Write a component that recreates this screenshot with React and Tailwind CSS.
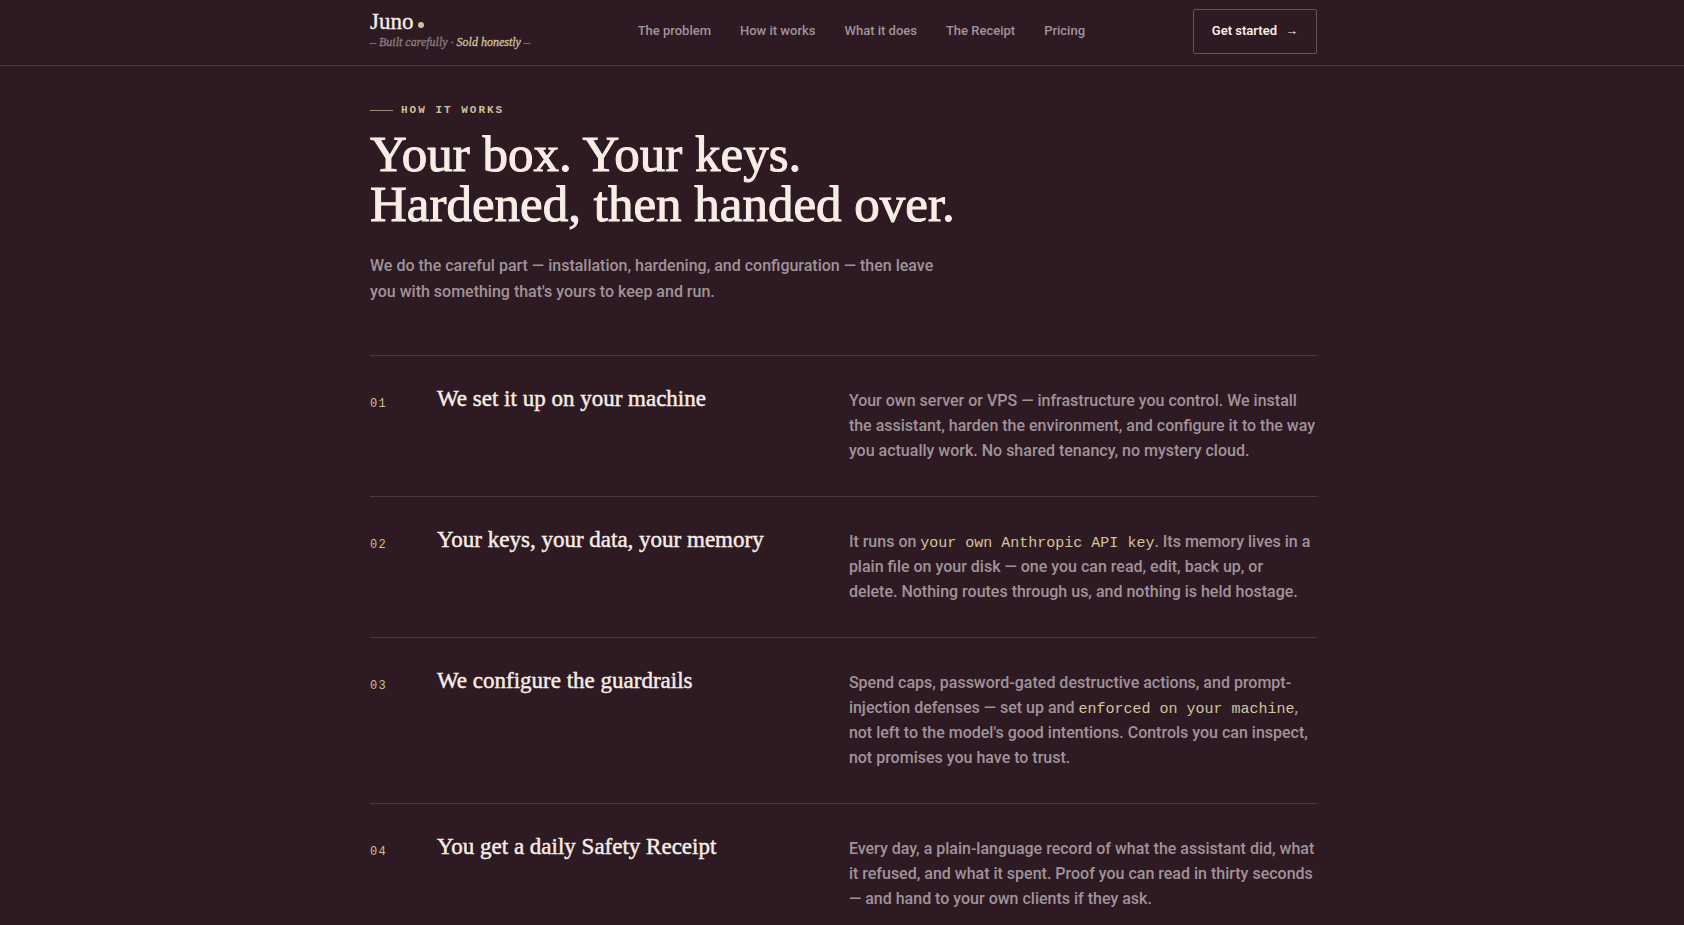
import React from "react";

const navLinks = [
  { label: "The problem", href: "#problem" },
  { label: "How it works", href: "#how" },
  { label: "What it does", href: "#what" },
  { label: "The Receipt", href: "#receipt" },
  { label: "Pricing", href: "#pricing" },
];

const steps = [
  {
    number: "01",
    title: "We set it up on your machine",
    body: (
      <>
        Your own server or VPS — infrastructure you control. We install
        the assistant, harden the environment, and configure it to the way
        you actually work. No shared tenancy, no mystery cloud.
      </>
    ),
  },
  {
    number: "02",
    title: "Your keys, your data, your memory",
    body: (
      <>
        It runs on <Mono>your own Anthropic API key</Mono>. Its memory lives in a
        plain file on your disk — one you can read, edit, back up, or
        <br />
        delete. Nothing routes through us, and nothing is held hostage.
      </>
    ),
  },
  {
    number: "03",
    title: "We configure the guardrails",
    body: (
      <>
        Spend caps, password-gated destructive actions, and prompt-injection
        defenses — set up and <Mono>enforced on your machine</Mono>, not left
        to the model's good intentions. Controls you can inspect, not promises
        you have to trust.
      </>
    ),
  },
  {
    number: "04",
    title: "You get a daily Safety Receipt",
    body: (
      <>
        Every day, a plain-language record of what the assistant did, what
        it refused, and what it spent. Proof you can read in thirty seconds
        — and hand to your own clients if they ask.
      </>
    ),
  },
];

function Mono({ children }) {
  return (
    <code className="font-['Liberation_Mono',monospace] text-[15px] leading-none font-normal text-[#d3c49d]">
      {children}
    </code>
  );
}

function Header() {
  return (
    <header className="border-b border-[#4a373f]">
      <div className="mx-auto flex h-[65px] max-w-[950px] items-center justify-between pb-[2px] pl-[3px]">
        <a href="#top" className="font-['Liberation_Serif',serif] [-webkit-text-stroke:0.02em]">
          <span className="flex items-center gap-[5px] text-[23px] leading-5 text-[#f6ede6]">
            Juno
            <span className="mt-[6px] size-[6px] rounded-full bg-[#cfc09b]" />
          </span>
          <span className="block text-[12px] leading-5 text-[#8b7b80] italic">
            – Built carefully · <span className="text-[#cfc09b]">Sold honestly</span> –
          </span>
        </a>
        <nav className="flex items-center gap-[29px] pb-[2px]">
          {navLinks.map((link) => (
            <a key={link.label} href={link.href} className="text-[13px] font-medium text-[#a0939a]">
              {link.label}
            </a>
          ))}
        </nav>
        <button className="flex h-[45px] items-center gap-2 rounded-xs border border-[#66525a] px-[18px] pb-[2px] text-[13px] font-semibold text-[#f6ede6]">
          Get started <span aria-hidden="true">→</span>
        </button>
      </div>
    </header>
  );
}

function Step({ number, title, body }) {
  return (
    <li className="grid grid-cols-[43px_29fr_35fr] gap-6 border-t border-[#4a373f] pt-8 pb-[33px]">
      <span className="pt-1 font-['Liberation_Mono',monospace] text-[12px] leading-6 tracking-widest text-[#cfc09b]">
        {number}
      </span>
      <h3 className="font-['Liberation_Serif',serif] text-[23px] leading-[22px] text-[#f6ede6] [-webkit-text-stroke:0.02em]">
        {title}
      </h3>
      <p className="text-[16px] leading-[25px] font-medium text-[#a0939a]">{body}</p>
    </li>
  );
}

export default function App() {
  return (
    <div
      id="top"
      className="min-h-screen bg-[#2d1a22] font-[Roboto,sans-serif]"
    >
      <Header />
      <main id="how" className="mx-auto max-w-[950px] pt-9 pl-[3px]">
        <div className="flex items-center gap-2 font-['Liberation_Mono',monospace] text-[11px] leading-4 font-bold tracking-[2px] text-[#cfc09b] uppercase">
          <span className="h-px w-[23px] bg-[#9c8d78]" />
          How it works
        </div>
        <h2 className="mt-[11px] font-['Liberation_Serif',serif] text-[51px] leading-[50px] text-[#f7eee6] [-webkit-text-stroke:0.02em]">
          Your box. Your keys.
          <br />
          Hardened, then handed over.
        </h2>
        <p className="mt-6 max-w-[590px] text-[16px] leading-[26px] font-medium text-[#a0939a]">
          We do the careful part — installation, hardening, and configuration — then leave
          you with something that's yours to keep and run.
        </p>
        <ol className="mt-[50px]">
          {steps.map((step) => (
            <Step key={step.number} {...step} />
          ))}
        </ol>
      </main>
    </div>
  );
}
